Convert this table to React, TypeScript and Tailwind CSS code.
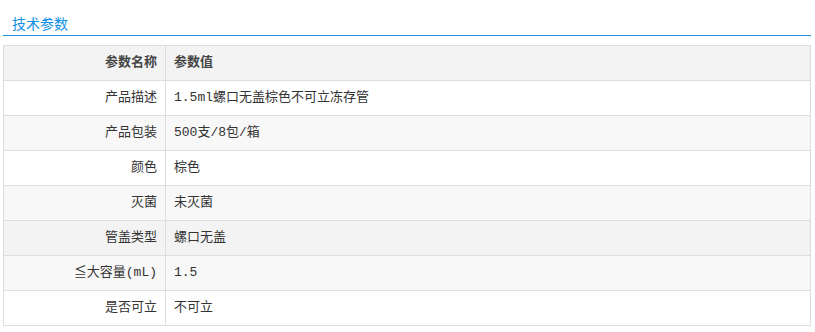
const rows: { name: string; value: string; bg: string }[] = [
  { name: "产品描述", value: "1.5ml螺口无盖棕色不可立冻存管", bg: "bg-white" },
  { name: "产品包装", value: "500支/8包/箱", bg: "bg-[#f8f8f8]" },
  { name: "颜色", value: "棕色", bg: "bg-white" },
  { name: "灭菌", value: "未灭菌", bg: "bg-[#f8f8f8]" },
  { name: "管盖类型", value: "螺口无盖", bg: "bg-[#f3f3f3]" },
  { name: "≦大容量(mL)", value: "1.5", bg: "bg-[#f8f8f8]" },
  { name: "是否可立", value: "不可立", bg: "bg-white" },
];

export default function App() {
  return (
    <div className="w-[815px] h-[332px] bg-white font-['Noto_Sans_CJK_SC',sans-serif]">
      <div className="ml-[3px] w-[808px]">
        {/* Section title */}
        <div className="pt-[14px] pl-[9px] text-[14px] leading-[19px] h-[36px] border-b border-[#1e8de0] text-[#0d8fe6]">
          技术参数
        </div>

        {/* Parameter table */}
        <div className="mt-[9px] w-[808px] border-t border-l border-r border-[#dddddd] text-[13px] font-['Liberation_Mono','Noto_Sans_CJK_SC',monospace]">
          <div className="flex h-[35px] border-b border-[#dddddd] bg-[#f3f3f3] font-bold text-[#444]">
            <div className="w-[162px] border-r border-[#dddddd] flex items-center justify-end pr-[8px]">
              参数名称
            </div>
            <div className="flex-1 flex items-center pl-[8px]">参数值</div>
          </div>
          {rows.map((r) => (
            <div key={r.name} className={`flex h-[35px] border-b border-[#dddddd] text-[#333] ${r.bg}`}>
              <div className="w-[162px] border-r border-[#dddddd] flex items-center justify-end pr-[8px]">
                {r.name}
              </div>
              <div className="flex-1 flex items-center pl-[8px]">{r.value}</div>
            </div>
          ))}
        </div>
      </div>
    </div>
  );
}
